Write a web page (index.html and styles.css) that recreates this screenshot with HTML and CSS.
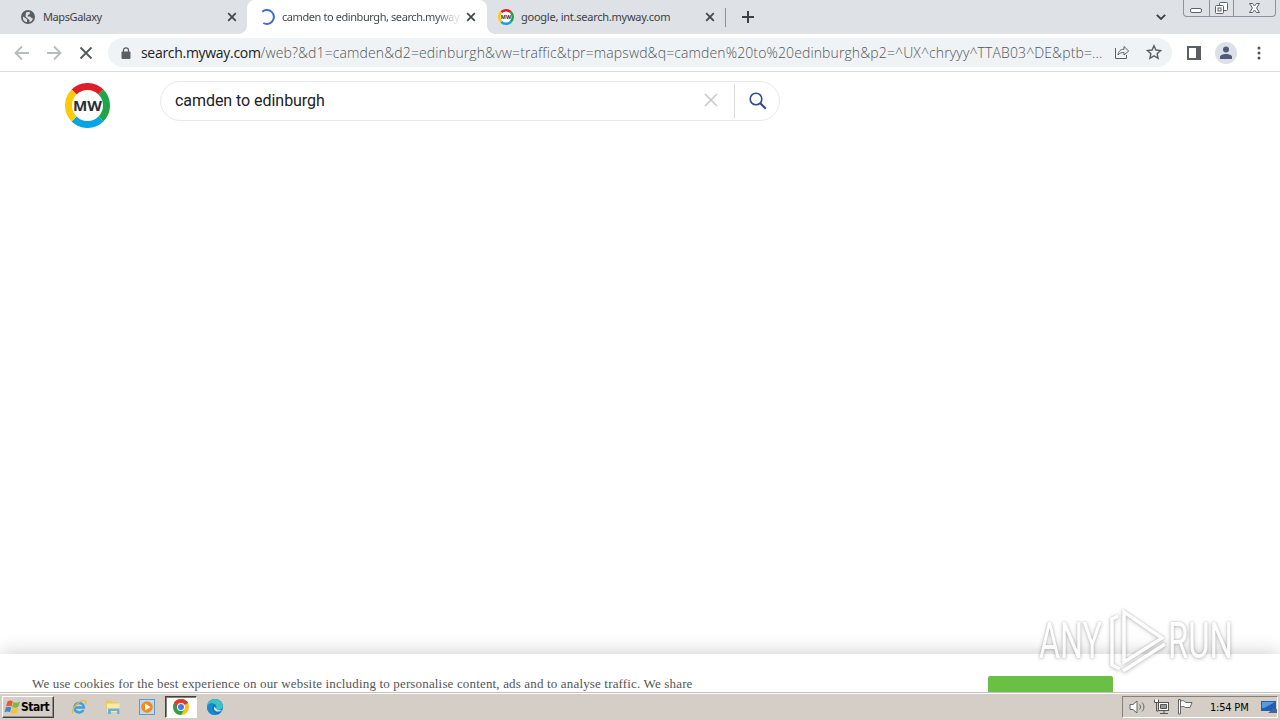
FILE: index.html
```html
<!DOCTYPE html>
<html lang="en">
<head>
  <meta charset="UTF-8">
  <meta name="viewport" content="width=device-width, initial-scale=1.0">
  <title>camden to edinburgh, search.myway.com</title>
  <link rel="stylesheet" href="styles.css">
</head>
<body>
  <svg width="0" height="0" class="defs">
    <symbol id="ring" viewBox="0 0 45 45">
      <circle cx="22.5" cy="22.5" r="18" fill="#fff"/>
      <g fill="none" stroke-width="7">
        <path d="M9.060 9.060A19 19 0 0 1 35.940 9.060" stroke="#dd1f29"/>
        <path d="M35.940 9.060A19 19 0 0 1 35.940 35.940" stroke="#1fa447"/>
        <path d="M35.940 35.940A19 19 0 0 1 9.060 35.940" stroke="#08a5e5"/>
        <path d="M9.060 35.940A19 19 0 0 1 9.060 9.060" stroke="#fdca0a"/>
      </g>
      <text x="22.5" y="28" text-anchor="middle" textLength="29" lengthAdjust="spacingAndGlyphs" font-family="Open Sans" font-weight="700" font-size="15" fill="#2b2e34">MW</text>
    </symbol>
    <symbol id="close" viewBox="0 0 10 10">
      <path d="M1.2 1.2l7.6 7.6M8.8 1.2L1.2 8.8" fill="none" stroke="currentColor" stroke-width="1.8"/>
    </symbol>
  </svg>

  <div class="tabs">
    <div class="tab">
      <svg class="favicon" viewBox="0 0 14 14"><circle cx="7" cy="7" r="7" fill="#5a5e63"/><path d="M2 6.500l3 2 1 1v2.500C3 12 1.500 9.500 2 6.500zM5 2.500L8.500 1.700l.5 2-2 1.200-.5 1.500H9l2 2 1-.3C11.500 11 10 12 8.500 12.300V10L6 8 4.500 6.500z" fill="#dee1e6"/></svg>
      <span class="title t1">MapsGalaxy</span>
      <svg class="close"><use href="#close"/></svg>
    </div>
    <div class="tab active">
      <svg class="favicon spinner" viewBox="0 0 16 16"><path d="M3.300 2.700A7 7 0 1 1 4.300 14" fill="none" stroke="#3b6fd0" stroke-width="2"/></svg>
      <span class="title t2">camden to edinburgh, search.myway</span>
      <svg class="close"><use href="#close"/></svg>
    </div>
    <div class="tab last">
      <svg class="favicon spinner"><use href="#ring"/></svg>
      <span class="title t3">google, int.search.myway.com</span>
      <svg class="close"><use href="#close"/></svg>
    </div>
    <svg class="plus" viewBox="0 0 12 12"><path d="M6 0v12M0 6h12" stroke="#3c4043" stroke-width="2"/></svg>
    <svg class="chevron" viewBox="0 0 10 6"><path d="M.8.800L5 5 9.200.800" fill="none" stroke="#3c4043" stroke-width="1.800"/></svg>
    <div class="window-buttons">
      <span><svg width="13" height="17"><rect x=".5" y="8.500" width="11" height="4" rx="1.500" fill="#fff" stroke="#5b616b"/></svg></span>
      <span><svg width="13" height="17" fill="#fff" stroke="#5b616b"><rect x="4.500" y="2.500" width="8" height="8" rx="1"/><rect x=".5" y="5.500" width="8" height="8" rx="1"/><rect x="3" y="8" width="3" height="3"/></svg></span>
      <span><svg width="13" height="17"><path d="M1.500 3.500h3l2 2.500 2-2.500h3l-3 4.500 3 4.500h-3l-2-2.500-2 2.500h-3l3-4.500z" fill="#fff" stroke="#5b616b"/></svg></span>
    </div>
  </div>

  <div class="toolbar">
    <svg class="nav" viewBox="0 0 16 16"><path d="M15 8H2M8 1.500L1.500 8 8 14.500" stroke="#b9bbbe"/></svg>
    <svg class="nav" viewBox="0 0 16 16"><path d="M1 8h13M8 1.500L14.500 8 8 14.500" stroke="#b9bbbe"/></svg>
    <svg class="nav" viewBox="0 0 16 16"><path d="M2.500 2.500l11 11M13.500 2.500l-11 11" stroke="#55585c"/></svg>
    <div class="address">
      <svg class="lock" viewBox="0 0 10 12"><rect x=".5" y="4.500" width="9" height="7.500" rx="1" fill="#5b5f64"/><path d="M2.500 5V3.300a2.500 2.500 0 0 1 5 0V5" fill="none" stroke="#5b5f64" stroke-width="1.300"/></svg>
      <div class="url"><b>search.myway.com</b><span>/web?&amp;d1=camden&amp;d2=edinburgh&amp;vw=traffic&amp;tpr=mapswd&amp;q=camden%20to%20edinburgh&amp;p2=^UX^chryyy^TTAB03^DE&amp;ptb=...</span></div>
      <svg class="share" viewBox="0 0 16 16"><path d="M1.500 4v10.500h11V11M4 11c.5-4 2.500-5.700 6-5.700V2.500L14.700 7 10 11V8.500C7.500 8.500 5.500 9 4 11z"/></svg>
      <svg class="star" viewBox="0 0 16 16"><path d="M8 1.700l1.900 4.300 4.700.5-3.500 3.200 1 4.600L8 11.900l-4.100 2.400 1-4.600-3.500-3.200 4.700-.5z"/></svg>
    </div>
    <svg class="panel" viewBox="0 0 14 14"><rect x="1" y="1" width="12" height="12" fill="#fff" stroke="#5b5f64" stroke-width="2"/><path d="M9 1h4v12H9z" fill="#5b5f64"/></svg>
    <svg class="avatar" viewBox="0 0 22 22"><circle cx="11" cy="11" r="11" fill="#dce0e8"/><circle cx="11" cy="7.500" r="3" fill="#505b78"/><path d="M5 17v-2c0-4 12-4 12 0v2z" fill="#505b78"/></svg>
    <svg class="dots" viewBox="0 0 4 14"><circle cx="2" cy="2" r="1.500"/><circle cx="2" cy="7" r="1.500"/><circle cx="2" cy="12" r="1.500"/></svg>
  </div>

  <div class="page">
    <header>
      <svg class="logo"><use href="#ring"/></svg>
      <div class="search">
        <span class="query">camden to edinburgh</span>
        <svg class="clear" viewBox="0 0 14 14"><path d="M1 1l12 12M13 1L1 13" stroke="#c9c9c9" stroke-width="1.700"/></svg>
        <div class="go"><svg width="18" height="18" viewBox="0 0 18 18"><circle cx="7" cy="7" r="5.800" fill="none" stroke="#2d4b92" stroke-width="1.600"/><path d="M11.300 11.300l5.500 5.500" stroke="#2d4b92" stroke-width="2.200"/></svg></div>
      </div>
    </header>
    <div class="cookies">
      <p>We use cookies for the best experience on our website including to personalise content, ads and to analyse traffic. We share</p>
      <div class="accept"></div>
    </div>
  </div>

  <div class="taskbar">
    <div class="start">
      <svg width="17" height="16" viewBox="0 0 16 16"><path d="M3 2.500C5 1 7 1.500 8.300 2.500L7 7.500C5.500 6.500 3.500 6.500 1.500 7.500z" fill="#e8592b"/><path d="M9 3c2 1 4 1 6.500-.5L14 7.500c-2 1.500-4.500 1.500-6.300.4z" fill="#7fb83a"/><path d="M1.300 8.500c2-1 4-1 5.500 0L5.500 13.300C4 12.300 2 12.300 0 13.300z" fill="#3c86d0"/><path d="M7.500 9c2 1 4 1 6.300-.3l-1.400 5c-2 1.300-4.400 1.300-6.200.2z" fill="#f6c42e"/></svg>
      <span>Start</span>
    </div>
    <div class="quick">
      <div class="app"><svg viewBox="0 0 16 16"><path d="M3.500 8.500h9.300C12.500 2.500 3.500 2.500 3.400 8.500c0 5.500 7 6.300 9 2.500" fill="none" stroke="#3ba1e0" stroke-width="2.500"/><path d="M2 14C-1 11 10-1 14.500 2c1 .8.500 2.500-.5 3.500" fill="none" stroke="#e5bd45" stroke-width="1.300"/></svg></div>
      <div class="app"><svg viewBox="0 0 16 16"><path d="M1 3V1.500h5L7.500 3H13v8H1z" fill="#e9ca65"/><path d="M2 4.500h12.500V13H2z" fill="#f9e9a5"/><path d="M3 15V9.500h11.500V15H12v-3H6v3z" fill="#67b3dc"/></svg></div>
      <div class="app"><svg viewBox="0 0 16 16"><rect x=".5" y=".5" width="15" height="15" fill="#bfd9ee" stroke="#5b9bd0"/><circle cx="8" cy="8" r="5.800" fill="#f28a1c"/><path d="M6 4.500v7L11.500 8z" fill="#fff"/></svg></div>
      <div class="app pressed"><svg viewBox="0 0 16 16"><circle cx="8" cy="8" r="8" fill="#fbc116"/><path d="M8 8L1.100 4A8 8 0 0 1 14.900 4z" fill="#e33b2e"/><path d="M8 8L1.100 4A8 8 0 0 0 8 16l3.500-6z" fill="#2da14c"/><path d="M8 4h6.900A8 8 0 0 0 1.100 4L5 10z" fill="#e33b2e"/><circle cx="8" cy="8" r="4" fill="#fff"/><circle cx="8" cy="8" r="3" fill="#3f7de8"/></svg></div>
      <div class="app"><svg viewBox="0 0 16 16"><circle cx="8" cy="8" r="8" fill="#1673c5"/><path d="M0 8C1 3.500 7 3 9 6.500c1 2-1 2.500 0 4 1.500 1.500 6 .5 7-2.500C16 3 12 0 8 0S0 4 0 8z" fill="#37c4c4"/><path d="M0 8c1-3 5-4 7-2-3 2-2 8 3 8-3 4-10 1-10-6z" fill="#1a8ad6"/><path d="M7.500 7.500c-1.500 2.500.5 5 3 5s3.500-.5 4.500-1.500c-3 .8-5.500.2-6-1.500z" fill="#d4ebe9"/></svg></div>
    </div>
    <div class="tray">
      <svg width="17" height="16" viewBox="0 0 17 16" fill="#fff" stroke="#666"><path d="M1 5.500h3L8 2v12l-4-3.500H1z"/><path d="M10.500 5.500c1.300 1.500 1.300 3.500 0 5M13 3.500c2.500 2.500 2.500 6.500 0 9" fill="none"/></svg>
      <svg width="16" height="16" viewBox="0 0 16 16" stroke="#555"><rect x="4.500" y="3.500" width="10" height="8" fill="#fff"/><path d="M6.500 5.500h6v4h-6z" fill="#999"/><path d="M6 14.500h8M10 12v2M2.500 6v6h2" fill="none"/><path d="M.5.500v3h4v-3M2.500 3.500v3" fill="#fff"/></svg>
      <svg width="16" height="16" viewBox="0 0 16 16" fill="#fff" stroke="#666"><path d="M.5.500h2V15h-2z"/><path d="M2.500 2c3-1 4 0 5 1.500h6.500L12 8.500H7.500C6 7 4.500 7.500 2.500 8z"/></svg>
      <span class="clock">1:54 PM</span>
      <svg class="desktop" width="16" height="14" viewBox="0 0 16 14"><path d="M0 1h15v10H0z" fill="#215fb5"/><path d="M1 2h13L3 8H1z" fill="#5b9ae0"/><path d="M7 13l5-4h4v4z" fill="#4a668e"/></svg>
    </div>
  </div>

  <svg class="watermark" viewBox="0 0 200 70">
    <g font-family="Roboto" font-weight="400" font-size="50">
      <text x="1" y="51" textLength="63" lengthAdjust="spacingAndGlyphs">ANY</text>
      <text x="130" y="51" textLength="65" lengthAdjust="spacingAndGlyphs">RUN</text>
    </g>
    <path d="M86 5v50l38-24zM80 9l-6 3v46l8 4M85 64l42-27"/>
  </svg>
</body>
</html>
```

FILE: styles.css
```css
* {
  box-sizing: border-box;
}

body {
  margin: 0;
  width: 1280px;
  height: 720px;
  overflow: hidden;
  display: flex;
  flex-direction: column;
  background: #fff;
  font-family: "DejaVu Sans Condensed", "DejaVu Sans", sans-serif;
}

svg {
  flex: none;
  display: block;
}

.defs {
  position: absolute;
}

.tabs {
  height: 34px;
  flex: none;
  display: flex;
  align-items: center;
  background: #dee1e6;
}

.tab {
  display: flex;
  align-items: center;
  width: 247px;
  height: 34px;
  padding: 0 10px 0 21px;
  color: #3c4043;
}

.tab.active {
  position: relative;
  width: 240px;
  padding: 0 11px 0 12px;
  background: #fff;
  border-radius: 8px 8px 0 0;
}

/* curved feet of the selected tab */
.active::before,
.active::after {
  content: "";
  position: absolute;
  bottom: 0;
  left: -8px;
  width: 8px;
  height: 8px;
  background: radial-gradient(circle at 0 0, transparent 7.5px, #fff 8px);
}

.active::after {
  left: 240px;
  background: radial-gradient(circle at 8px 0, transparent 7.5px, #fff 8px);
}

.tab.last {
  width: 239px;
  padding: 0 11px;
  background: linear-gradient(#8d9197, #8d9197) right 0 top 8px / 1px 19px no-repeat;
}

.favicon {
  width: 14px;
  height: 14px;
  margin-right: 8px;
}

.spinner {
  width: 16px;
  height: 16px;
  margin-right: 7px;
}

.title {
  flex: 1;
  overflow: hidden;
  white-space: nowrap;
  font-family: "Noto Sans", sans-serif;
  font-size: 11px;
  line-height: 16px;
  letter-spacing: -0.25px;
}

.t1 {
  letter-spacing: -0.4px;
}

.t2 {
  margin-right: 4px;
  background: linear-gradient(90deg, #3c4043 86%, #ddd 96%);
  background-clip: text;
  color: transparent;
  letter-spacing: -0.42px;
}

.close {
  width: 10px;
  height: 10px;
  color: #44484d;
}

.plus {
  width: 12px;
  height: 12px;
  margin-left: 16px;
}

.chevron {
  width: 10px;
  height: 6px;
  margin-left: auto;
}

.window-buttons {
  display: flex;
  align-self: flex-start;
  width: 93px;
  height: 17px;
  margin: 0 4px 0 17px;
  border: 1px solid #8d939d;
  border-top: 0;
  border-radius: 0 0 4px 4px;
}

.window-buttons span {
  display: flex;
  justify-content: center;
  width: 25px;
}

.window-buttons span + span {
  border-left: 1px solid #8d939d;
}

.window-buttons span:last-child {
  width: 42px;
}

.toolbar {
  height: 38px;
  flex: none;
  display: flex;
  align-items: center;
  padding-left: 14px;
  border-bottom: 1px solid #d9dadc;
}

.nav {
  width: 16px;
  height: 16px;
  margin-right: 16px;
  fill: none;
  stroke-width: 1.8;
}

.address {
  display: flex;
  align-items: center;
  width: 1064px;
  height: 29px;
  margin-left: -2px;
  padding: 0 10px 0 13px;
  background: #f0f3f5;
  border-radius: 15px;
}

.lock {
  width: 10px;
  height: 12px;
}

.url {
  flex: 1;
  min-width: 0;
  margin-left: 10px;
  white-space: nowrap;
  font-family: "Open Sans", sans-serif;
  font-size: 14px;
  font-weight: 300;
  color: #50555a;
}

.url b {
  font-weight: 400;
  color: #202124;
  letter-spacing: -0.3px;
}

.url span {
  letter-spacing: 0.12px;
}

.share,
.star {
  position: relative;
  top: -1px;
  width: 16px;
  height: 16px;
  fill: none;
  stroke: #5b5f64;
}

.star {
  margin-left: 16px;
  stroke-width: 1.4;
}

.panel {
  width: 14px;
  height: 14px;
  margin-left: 15px;
}

.avatar {
  width: 22px;
  height: 22px;
  margin-left: 14px;
}

.dots {
  width: 4px;
  height: 14px;
  margin-left: 20px;
  fill: #505357;
}

.page {
  flex: 1;
  display: flex;
  flex-direction: column;
  justify-content: space-between;
  overflow: hidden;
}

header {
  display: flex;
  align-items: flex-start;
  padding: 9px 0 0 65px;
}

.logo {
  width: 45px;
  height: 45px;
  margin-top: 2px;
}

.search {
  display: flex;
  align-items: center;
  width: 620px;
  height: 40px;
  margin-left: 50px;
  padding-left: 14px;
  border: 1px solid #e9e9e9;
  border-radius: 20px;
}

.query {
  flex: 1;
  padding-bottom: 2px;
  font: 16px Roboto, sans-serif;
  letter-spacing: -0.05px;
  color: #202124;
}

.clear {
  width: 14px;
  height: 14px;
  margin: 0 16px 2px 0;
}

.go {
  display: flex;
  align-items: center;
  width: 45px;
  height: 34px;
  padding-left: 14px;
  border-left: 1px solid #dcdcdc;
}

.cookies {
  display: flex;
  align-items: flex-start;
  height: 38px;
  box-shadow: 0 0 20px rgba(0, 0, 0, 0.22);
}

.cookies p {
  width: 956px;
  margin: 21px 0 0 32px;
  white-space: nowrap;
  font: 13px/18px "Liberation Serif", serif;
  letter-spacing: 0.16px;
  color: #555;
}

.accept {
  width: 125px;
  height: 20px;
  margin-top: 22px;
  background: #6abf45;
  border-radius: 2px 2px 0 0;
}

.taskbar {
  height: 28px;
  flex: none;
  display: flex;
  align-items: center;
  padding: 1px 2px 0;
  background: #d5cec7;
  border-top: 1px solid #c5c2bd;
  box-shadow: inset 0 1px #fff;
}

.start {
  display: flex;
  align-items: center;
  width: 52px;
  height: 22px;
  padding-left: 1px;
  border: 1px solid;
  border-color: #fff #404040 #404040 #fff;
  box-shadow: inset -1px -1px #918c86;
  font-size: 12px;
  font-weight: 700;
  color: #000;
}

.start span {
  letter-spacing: -0.5px;
}

.quick {
  display: flex;
  align-items: center;
  margin-left: 9px;
  gap: 2px;
}

.app {
  display: flex;
  align-items: center;
  justify-content: center;
  width: 32px;
  height: 22px;
}

.app svg {
  width: 16px;
  height: 16px;
}

.app.pressed {
  background: #fff;
  border: 1px solid;
  border-color: #404040 #fff #fff #404040;
  box-shadow: inset 1px 1px #858078;
}

.tray {
  display: flex;
  align-items: center;
  width: 156px;
  height: 22px;
  margin-left: auto;
  padding-left: 6px;
  gap: 8px;
  border: 1px solid;
  border-color: #85817b #fff #fff #85817b;
}

.clock {
  margin-left: 8px;
  white-space: nowrap;
  font-size: 11px;
  letter-spacing: -0.2px;
  color: #000;
}

.desktop {
  margin-left: auto;
}

/* overlay in the bottom right corner */
.watermark {
  position: absolute;
  left: 1038px;
  top: 607px;
  width: 200px;
  height: 70px;
  overflow: visible;
  fill: #fff;
  opacity: 0.8;
  filter: drop-shadow(0 0 1px rgba(0, 0, 0, 0.25)) drop-shadow(0 1px 2px rgba(0, 0, 0, 0.25));
}

.watermark path {
  fill: none;
  stroke: #fff;
  stroke-width: 3.5;
}
```
